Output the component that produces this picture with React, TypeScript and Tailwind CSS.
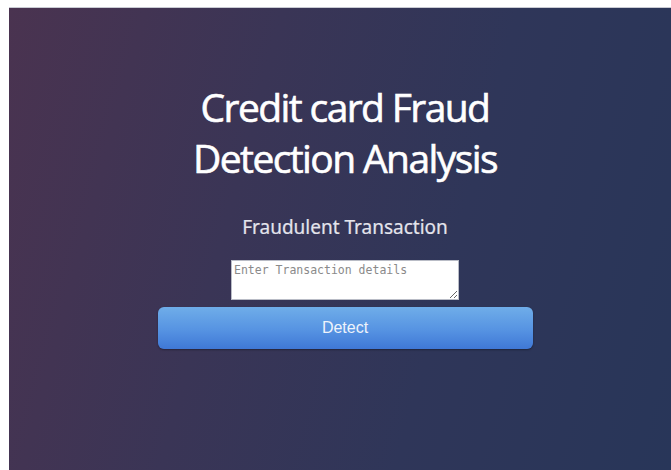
import React, { useState } from 'react';

export default function App() {
  const [details, setDetails] = useState('');

  return (
    <div className="w-[671px] h-[470px] bg-white pl-[9px] pt-[7px] overflow-hidden">
      <div className="h-full w-full border-t border-[#c9cbd3] bg-[linear-gradient(105deg,#4a3350_0%,#3a3556_35%,#2f3659_65%,#283659_100%)] pl-[10px] flex flex-col items-center">
        <h1 className="mt-[73px] text-center text-white text-[39px] leading-[51px] font-normal tracking-[-1.6px] [-webkit-text-stroke:0.6px_#ffffff] font-['Open_Sans','Noto_Sans',sans-serif]">
          Credit card Fraud
          <br />
          Detection Analysis
        </h1>
        <h2 className="mt-[32px] text-[19px] leading-6 text-[#e4e4ec] [-webkit-text-stroke:0.2px_#e4e4ec] font-['Noto_Sans','Open_Sans',sans-serif]">
          Fraudulent Transaction
        </h2>
        <textarea
          value={details}
          onChange={(e) => setDetails(e.target.value)}
          placeholder="Enter Transaction details"
          className="mt-[21px] w-[228px] h-[40px] bg-white border border-[#b9bcc6] px-[2px] pt-[1px] text-[11.5px] leading-[16px] text-[#333] placeholder:text-[#8a8a8a] outline-none font-['DejaVu_Sans_Mono',monospace]"
        />
        <button
          type="button"
          className="mt-[7px] w-[375px] h-[42px] rounded-[6px] bg-[linear-gradient(180deg,#6fade9_0%,#5693e2_55%,#3f78d6_100%)] text-[16px] text-[#eef3fb] shadow-[0_1px_2px_rgba(0,0,0,0.35)] font-['Liberation_Sans',Arial,sans-serif]"
        >
          Detect
        </button>
      </div>
    </div>
  );
}
